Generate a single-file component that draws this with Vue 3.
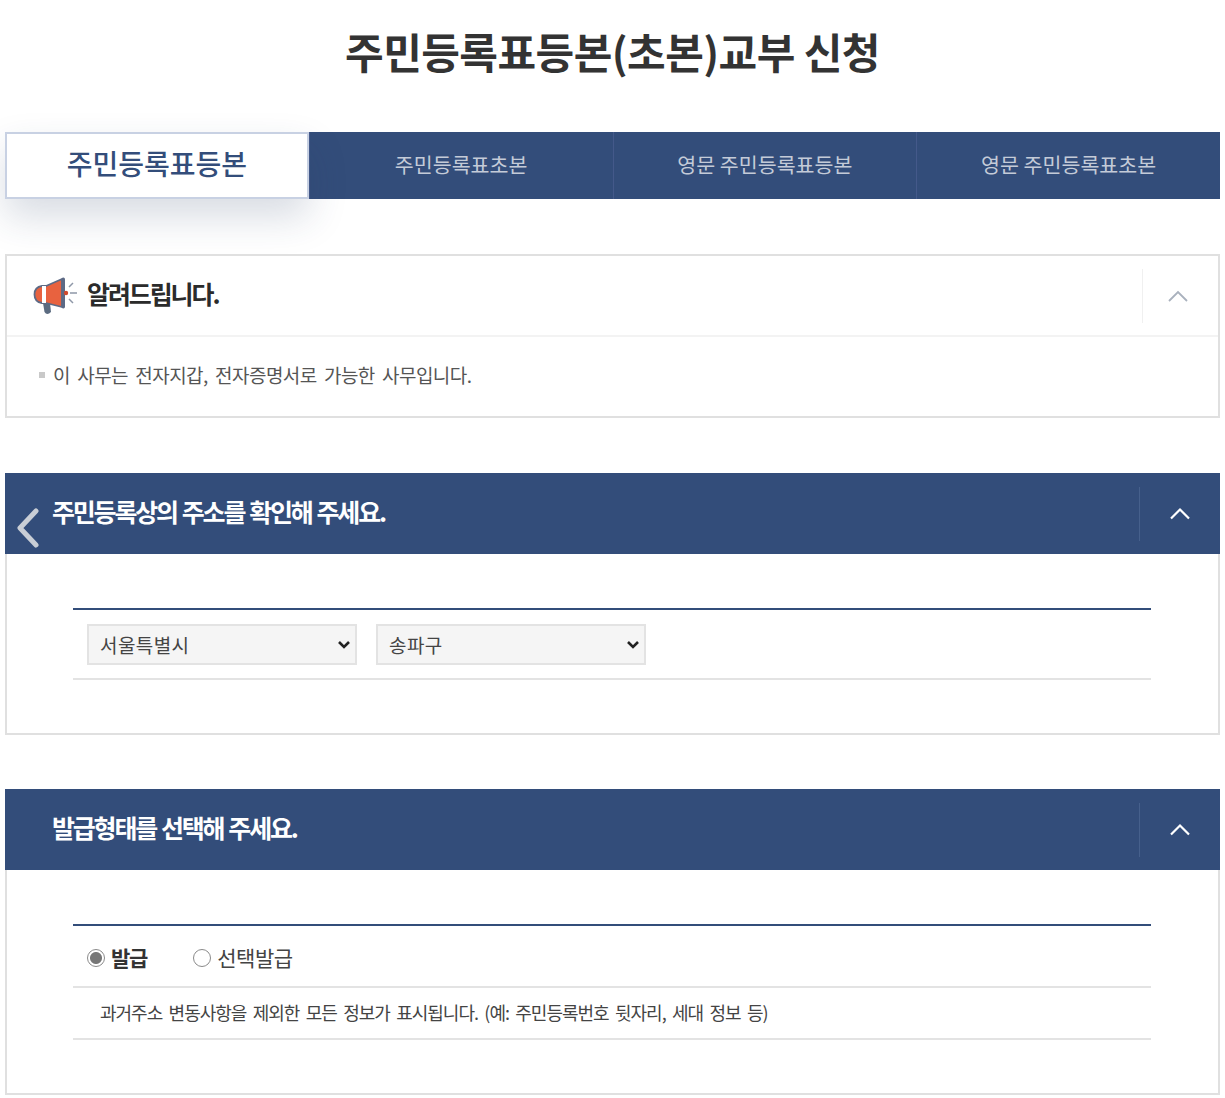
<script setup>
const tabs = ['주민등록표등본', '주민등록표초본', '영문 주민등록표등본', '영문 주민등록표초본']
const selects = ['서울특별시', '송파구']
</script>

<template>
  <main class="page">
    <h1 class="title">주민등록표등본(초본)교부 신청</h1>

    <nav class="tabs">
      <a v-for="(t, i) in tabs" :key="t" class="tab" :class="{ active: i === 0 }">{{ t }}</a>
    </nav>

    <section class="notice">
      <header class="notice-head">
        <svg class="horn" width="44" height="40" viewBox="0 0 44 40">
          <path d="M10 27 L17 27 L18 36 Q14 40 11.500 36Z" fill="#5b6b80"/>
          <path d="M9 10 L13 10 L29 3 L29 31 L13 27 L9 27 Q1.500 26 1.500 18.500 Q1.500 11 9 10Z" fill="#e8623f" stroke="#5d6a85" stroke-width="1.800" stroke-linejoin="round"/>
          <rect x="9" y="10" width="4" height="17" fill="#fff"/>
          <rect x="28.500" y="1.500" width="3.500" height="31" rx="1.700" fill="#5d6a85"/>
          <circle cx="33" cy="17" r="2.200" fill="#cf4a2e"/>
          <path d="M36 11 L40 7 M37 17 H44 M36 23 L40 27" stroke="#8f98a8" stroke-width="1.500" fill="none"/>
        </svg>
        <h2 class="notice-title">알려드립니다.</h2>
        <div class="toggle light">
          <svg width="22" height="12" viewBox="0 0 22 12"><path d="M2 11 L11 2 L20 11" fill="none" stroke="#a9b1bd" stroke-width="1.800"/></svg>
        </div>
      </header>
      <div class="notice-body">
        <span class="bullet"></span>
        <p>이 사무는 전자지갑, 전자증명서로 가능한 사무입니다.</p>
      </div>
    </section>

    <section class="panel">
      <header class="panel-head">
        <h2>주민등록상의 주소를 확인해 주세요.</h2>
        <div class="toggle dark">
          <svg width="22" height="13" viewBox="0 0 22 13"><path d="M2 11.500 L11 2.500 L20 11.500" fill="none" stroke="#fff" stroke-width="2.200"/></svg>
        </div>
      </header>
      <div class="panel-body">
        <div class="table-row selects">
          <div v-for="s in selects" :key="s" class="sel-wrap">
            <select class="sel"><option>{{ s }}</option></select>
            <svg class="sel-arrow" width="14" height="10" viewBox="0 0 14 10"><path d="M2 2 L7 7 L12 2" fill="none" stroke="#222" stroke-width="2.600"/></svg>
          </div>
        </div>
      </div>
      <svg class="back" width="26" height="40" viewBox="0 0 26 40"><path d="M21 3 L5 20 L21 37" fill="none" stroke="#c9ced6" stroke-width="5" stroke-linecap="round" stroke-linejoin="round"/></svg>
    </section>

    <section class="panel last">
      <header class="panel-head">
        <h2>발급형태를 선택해 주세요.</h2>
        <div class="toggle dark">
          <svg width="22" height="13" viewBox="0 0 22 13"><path d="M2 11.500 L11 2.500 L20 11.500" fill="none" stroke="#fff" stroke-width="2.200"/></svg>
        </div>
      </header>
      <div class="panel-body">
        <div class="table-row radios">
          <label class="radio on"><input type="radio" name="k" checked /><span>발급</span></label>
          <label class="radio"><input type="radio" name="k" /><span>선택발급</span></label>
        </div>
        <p class="desc">과거주소 변동사항을 제외한 모든 정보가 표시됩니다. (예: 주민등록번호 뒷자리, 세대 정보 등)</p>
      </div>
    </section>
  </main>
</template>

<style>
html, body { background: #fff; }
</style>

<style scoped>
.page {
  width: 1215px;
  margin-left: 5px;
  font-family: "Noto Sans CJK KR", "Noto Sans", sans-serif;
  color: #333;
}
.title {
  margin: 0;
  height: 132px;
  padding-top: 21px;
  box-sizing: border-box;
  text-align: center;
  font-size: 42px;
  line-height: 60px;
  font-weight: 700;
  letter-spacing: -0.550px;
  color: #333;
}
.tabs {
  display: grid;
  grid-template-columns: repeat(4, 1fr);
  height: 67px;
  background: #334d7a;
}
.tab {
  display: flex;
  align-items: center;
  justify-content: center;
  padding-bottom: 4px;
  font-size: 20.600px;
  color: #c4cbd8;
  border-left: 1px solid #44598a;
}
.tab:first-child { border-left: 0; }
.tab.active {
  background: #fff;
  color: #334d7a;
  font-size: 28px;
  font-weight: 500;
  border: 2px solid #c8d1e3;
  padding-bottom: 6px;
  box-shadow: 0 18px 38px rgba(40, 60, 100, 0.18);
  position: relative;
}
.notice {
  margin-top: 55px;
  height: 164px;
  box-sizing: border-box;
  border: 2px solid #e0e0e0;
}
.notice-head {
  display: flex;
  align-items: center;
  height: 79px;
  padding-left: 26px;
  border-bottom: 2px solid #f3f3f3;
}
.horn { flex: none; }
.notice-title {
  margin: 0 0 6px 10px;
  flex: 1;
  font-size: 25px;
  font-weight: 700;
  letter-spacing: -2.100px;
  color: #2b2b2b;
}
.toggle {
  display: flex;
  align-items: center;
  justify-content: center;
  height: 54px;
  border-left: 1px solid #f0f0f0;
}
.toggle.light { width: 70px; padding-right: 5px; }
.toggle.dark { width: 80px; border-left-color: #46608c; }
.notice-body {
  display: flex;
  align-items: center;
  height: 75px;
  padding: 0 0 6px 32px;
  gap: 8px;
}
.bullet { width: 6px; height: 6px; background: #c9c9c9; }
.notice-body p {
  margin: 0;
  font-size: 19px;
  letter-spacing: -0.550px;
  word-spacing: 3.600px;
  color: #555;
}
.panel {
  position: relative;
  margin-top: 54px;
  border: 2px solid #e0e0e0;
  border-top: 0;
  box-sizing: border-box;
  height: 262px;
}
.notice + .panel { margin-top: 55px; }
.panel.last { height: 306px; }
.panel-head {
  display: flex;
  align-items: center;
  justify-content: space-between;
  height: 81px;
  margin: 0 -2px;
  padding-left: 47px;
  background: #334d7a;
}
.panel-head h2 {
  margin: 0 0 6px;
  font-size: 25px;
  font-weight: 700;
  letter-spacing: -2.200px;
  word-spacing: 1.500px;
  color: #fff;
}
.panel-body {
  margin: 54px 67px 0 66px;
  border-top: 2px solid #334d7a;
}
.table-row { border-bottom: 2px solid #e3e3e3; }
.selects {
  display: flex;
  gap: 19px;
  height: 70px;
  box-sizing: border-box;
  padding: 14px 0 0 14px;
}
.sel-wrap { position: relative; width: 270px; height: 41px; }
.sel {
  appearance: none;
  width: 100%;
  height: 100%;
  box-sizing: border-box;
  padding-left: 11px;
  border: 2px solid #e3e3e3;
  border-radius: 0;
  background: #f5f5f5;
  font-family: inherit;
  font-size: 19px;
  letter-spacing: 0.400px;
  color: #444;
}
.sel-arrow {
  position: absolute;
  right: 6px;
  top: 16px;
  pointer-events: none;
}
.back { position: absolute; left: 8px; top: 35px; }
.radios {
  display: flex;
  align-items: center;
  height: 62px;
  box-sizing: border-box;
  padding: 2px 0 0 14px;
  gap: 46px;
}
.radio {
  display: flex;
  align-items: center;
  gap: 6px;
  font-size: 21px;
  letter-spacing: -0.500px;
  color: #444;
}
.radio.on { font-weight: 700; color: #333; letter-spacing: -1.200px; }
.radio input {
  appearance: none;
  margin: 2px 0 0;
  width: 18px;
  height: 18px;
  border: 1.500px solid #8a8a8a;
  border-radius: 50%;
  background: #fff;
}
.radio input:checked { background: radial-gradient(circle, #777 0 5.500px, #fff 6.500px); }
.desc {
  margin: 0;
  display: flex;
  align-items: center;
  height: 52px;
  box-sizing: border-box;
  padding: 0 0 2px 27px;
  border-bottom: 2px solid #e3e3e3;
  font-size: 18px;
  letter-spacing: -1px;
  word-spacing: 3.300px;
  color: #444;
}
</style>
